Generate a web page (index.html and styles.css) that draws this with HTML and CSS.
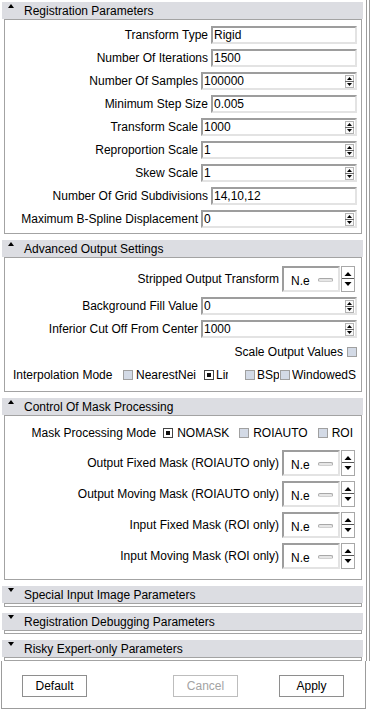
FILE: index.html
```html
<!DOCTYPE html>
<html lang="en">
<head>
  <meta charset="UTF-8" />
  <title>Registration Parameters</title>
  <link rel="stylesheet" href="styles.css">
</head>
<body>

<svg class="defs" width="0" height="0">
  <symbol id="spin-small" viewBox="0 0 9 13">
    <rect x="0.5" y="0.5" width="8" height="12" fill="#fafafa" stroke="#b4b4b4"/>
    <line x1="0" y1="6.5" x2="9" y2="6.5" stroke="#6a6a6a"/>
    <path d="M2 5 L4.5 2 L7 5Z" fill="#000"/>
    <path d="M2 8 L7 8 L4.5 11Z" fill="#000"/>
  </symbol>
  <symbol id="spin-col" viewBox="0 0 14 26">
    <rect x="0.5" y="0.5" width="13" height="25" fill="#fff" stroke="#a8a8a8"/>
    <line x1="1" y1="12.5" x2="13" y2="12.5" stroke="#555"/>
    <path d="M3.5 10 L7 6 L10.5 10Z" fill="#000"/>
    <path d="M3.5 16 L10.5 16 L7 20Z" fill="#000"/>
  </symbol>
</svg>

<div class="scroller">
  <div class="content">

    <section class="group">
      <div class="group-head"><span class="tri up"></span>Registration Parameters</div>
      <div class="group-body reg">
        <div class="row"><span>Transform Type</span><div class="field">Rigid</div></div>
        <div class="row"><span>Number Of Iterations</span><div class="field">1500</div></div>
        <div class="row"><span>Number Of Samples</span><div class="field spin">100000<svg class="arrows"><use href="#spin-small"/></svg></div></div>
        <div class="row"><span>Minimum Step Size</span><div class="field">0.005</div></div>
        <div class="row"><span>Transform Scale</span><div class="field spin">1000<svg class="arrows"><use href="#spin-small"/></svg></div></div>
        <div class="row"><span>Reproportion Scale</span><div class="field spin">1<svg class="arrows"><use href="#spin-small"/></svg></div></div>
        <div class="row"><span>Skew Scale</span><div class="field spin">1<svg class="arrows"><use href="#spin-small"/></svg></div></div>
        <div class="row"><span>Number Of Grid Subdivisions</span><div class="field">14,10,12</div></div>
        <div class="row"><span>Maximum B-Spline Displacement</span><div class="field spin">0<svg class="arrows"><use href="#spin-small"/></svg></div></div>
      </div>
    </section>

    <section class="group">
      <div class="group-head"><span class="tri up"></span>Advanced Output Settings</div>
      <div class="group-body output">
        <div class="row tall">
          <span>Stripped Output Transform</span>
          <div class="picker"><div class="combo">N.e<span class="grip"></span></div><svg class="col"><use href="#spin-col"/></svg></div>
        </div>
        <div class="row"><span>Background Fill Value</span><div class="field spin">0<svg class="arrows"><use href="#spin-small"/></svg></div></div>
        <div class="row"><span>Inferior Cut Off From Center</span><div class="field spin">1000<svg class="arrows"><use href="#spin-small"/></svg></div></div>
        <div class="row check"><span>Scale Output Values</span><span class="cb"></span></div>
        <div class="row interp">
          <span class="interp-label">Interpolation Mode</span>
          <span class="opt opt-nearest"><span class="cb"></span><span class="clip">NearestNeighbor</span></span>
          <span class="opt opt-linear"><span class="cb on"><i></i></span><span class="clip">Linear</span></span>
          <span class="opt opt-bspline"><span class="cb"></span><span class="clip">BSpline</span></span>
          <span class="opt opt-windowed"><span class="cb"></span><span class="clip">WindowedSinc</span></span>
        </div>
      </div>
    </section>

    <section class="group">
      <div class="group-head"><span class="tri up"></span>Control Of Mask Processing</div>
      <div class="group-body mask">
        <div class="row modes">
          <span class="modes-label">Mask Processing Mode</span>
          <span class="opt"><span class="cb on"><i></i></span>NOMASK</span>
          <span class="opt"><span class="cb"></span>ROIAUTO</span>
          <span class="opt"><span class="cb"></span>ROI</span>
        </div>
        <div class="row tall">
          <span>Output Fixed Mask (ROIAUTO only)</span>
          <div class="picker"><div class="combo">N.e<span class="grip"></span></div><svg class="col"><use href="#spin-col"/></svg></div>
        </div>
        <div class="row tall">
          <span>Output Moving Mask (ROIAUTO only)</span>
          <div class="picker"><div class="combo">N.e<span class="grip"></span></div><svg class="col"><use href="#spin-col"/></svg></div>
        </div>
        <div class="row tall">
          <span>Input Fixed Mask (ROI only)</span>
          <div class="picker"><div class="combo">N.e<span class="grip"></span></div><svg class="col"><use href="#spin-col"/></svg></div>
        </div>
        <div class="row tall">
          <span>Input Moving Mask (ROI only)</span>
          <div class="picker"><div class="combo">N.e<span class="grip"></span></div><svg class="col"><use href="#spin-col"/></svg></div>
        </div>
      </div>
    </section>

    <section class="group">
      <div class="group-head"><span class="tri down"></span>Special Input Image Parameters</div>
      <div class="group-body closed"></div>
    </section>

    <section class="group">
      <div class="group-head"><span class="tri down"></span>Registration Debugging Parameters</div>
      <div class="group-body closed"></div>
    </section>

    <section class="group">
      <div class="group-head"><span class="tri down"></span>Risky Expert-only Parameters</div>
      <div class="group-body closed"></div>
    </section>

  </div>
  <div class="rail"></div>
</div>

<div class="actions">
  <button class="btn">Default</button>
  <button class="btn cancel" disabled>Cancel</button>
  <button class="btn apply">Apply</button>
</div>

</body>
</html>
```

FILE: styles.css
```css
* {
  box-sizing: border-box;
}

html, body {
  margin: 0;
  padding: 0;
}

body {
  font-family: "Liberation Sans", Arial, sans-serif;
  font-size: 12px;
  color: #000;
  background-color: #fff;
  width: 373px;
  height: 714px;
  overflow: hidden;
}

.defs {
  position: absolute;
  width: 0;
  height: 0;
}

.scroller {
  display: flex;
  height: 661px;
}

.content {
  width: 367px;
  padding-top: 2px;
  border-right: 1px solid #9c9c9c;
}

.rail {
  width: 3px;
  border-right: 1px solid #9c9c9c;
}

/* collapsible groups */
.group {
  margin: 0 3px 6px 2px;
}

.group-head {
  height: 17px;
  background-color: #dcdde2;
  display: flex;
  padding: 1px 0 0 6px;
  line-height: 16px;
  white-space: nowrap;
}

.tri {
  width: 0;
  height: 0;
  border-left: 3.5px solid transparent;
  border-right: 3.5px solid transparent;
  margin: 1px 10px 0 0;
}

.tri.up {
  border-bottom: 4px solid #000;
}

.tri.down {
  border-top: 4px solid #000;
}

.group-body {
  margin: 0 1px 0 2px;
  border: 1px solid #a3a3a3;
}

.group-body.closed {
  height: 4px;
}

.reg {
  display: flex;
  flex-direction: column;
  gap: 5px;
  padding: 6px 4px 5px 5px;
}

.output {
  display: flex;
  flex-direction: column;
  gap: 5px;
  padding: 8px 4px 7px 5px;
}

.mask {
  display: flex;
  flex-direction: column;
  gap: 5px;
  padding: 8px 4px 10px 5px;
}

.row {
  display: flex;
  justify-content: flex-end;
  align-items: center;
  gap: 3px;
  height: 18px;
  white-space: nowrap;
}

.row > * {
  flex-shrink: 0;
}

.row.tall {
  height: 26px;
  padding-right: 2px;
}

.mask .row.modes {
  margin-bottom: 3px;
}

/* text fields and spinners */
.field {
  width: 146px;
  height: 18px;
  border: 2px solid;
  border-color: #9d9d9d #e3e3e3 #e3e3e3 #9d9d9d;
  padding-left: 1px;
  display: flex;
  align-items: center;
  background-color: #fff;
}

.field.spin {
  width: 156px;
  padding-right: 1px;
}

.arrows {
  width: 9px;
  height: 13px;
  margin-left: auto;
}

/* combo with its own spin column */
.picker {
  display: flex;
  gap: 1px;
}

.combo {
  width: 58px;
  height: 26px;
  border: 2px solid;
  border-color: #9d9d9d #e3e3e3 #e3e3e3 #9d9d9d;
  display: flex;
  align-items: center;
  padding: 3px 0 0 7px;
}

.combo .grip {
  width: 15px;
  height: 4px;
  margin: 0 5px 2px auto;
  border-radius: 2px;
  background-color: #e6e6e6;
  border: 1px solid #a8a8a8;
  border-bottom-color: #d0d0d0;
}

.col {
  width: 14px;
  height: 26px;
}

/* checkboxes */
.cb {
  display: inline-block;
  width: 10px;
  height: 10px;
  border: 1px solid #a0a0a0;
  background-color: #d3dae6;
  flex: 0 0 auto;
}

.cb.on {
  border-color: #444;
  background-color: #fff;
  padding: 2px;
}

.cb.on i {
  display: block;
  width: 4px;
  height: 4px;
  background-color: #111;
}

.row.check {
  gap: 4px;
}

.opt {
  display: flex;
  align-items: center;
  gap: 4px;
}

.clip {
  overflow: hidden;
  white-space: nowrap;
}

.row.interp {
  justify-content: flex-start;
  gap: 0;
  padding-left: 3px;
}

.interp-label {
  width: 110px;
}

.opt-nearest { width: 81px; gap: 3px; }
.opt-nearest .clip { width: 60px; }
.opt-linear { width: 41px; gap: 2px; }
.opt-linear .clip { width: 12px; }
.opt-bspline { width: 35px; gap: 2px; }
.opt-bspline .clip { width: 22px; }
.opt-windowed { gap: 2px; }
.opt-windowed .clip { width: 64px; }

.row.modes {
  gap: 10px;
  padding-right: 4px;
}

.modes-label {
  margin-right: -3px;
}

/* bottom buttons */
.actions {
  margin-left: 1px;
  width: 365px;
  height: 48px;
  border: 1px solid #9c9c9c;
  border-top: 0;
  display: flex;
  align-items: flex-start;
  padding: 14px 0 0 20px;
}

.btn {
  width: 65px;
  height: 22px;
  border: 1px solid #8e8e8e;
  background-color: #fff;
  font: inherit;
  color: #000;
  padding: 0;
  display: flex;
  align-items: center;
  justify-content: center;
}

.btn.cancel {
  margin-left: 86px;
  border-color: #bdbdbd;
  color: #a3a3a3;
}

.btn.apply {
  margin-left: 41px;
}
```
